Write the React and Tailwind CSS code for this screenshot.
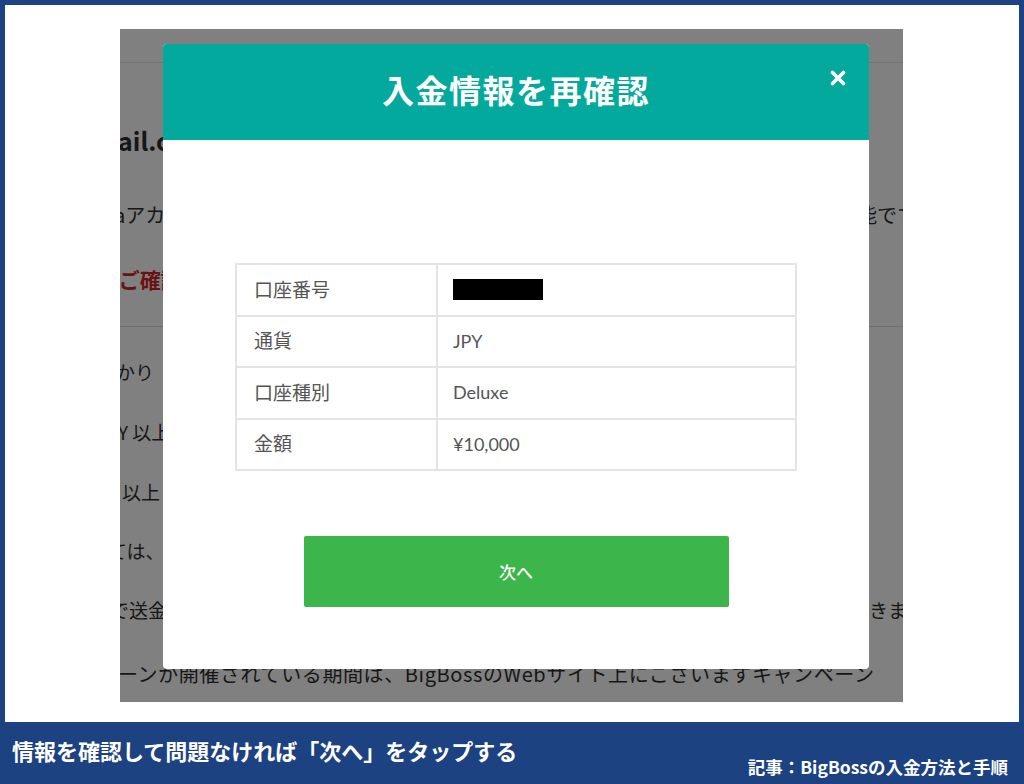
import React from "react";

const rows = [
    { label: "口座番号", value: null },
    { label: "通貨", value: "JPY" },
    { label: "口座種別", value: "Deluxe" },
    { label: "金額", value: "¥10,000" },
];

const jp = { fontFamily: '"Noto Sans CJK JP", "Noto Sans", sans-serif' };
const mixed = { fontFamily: 'Lato, "Noto Sans CJK JP", sans-serif' };

function BackgroundPage() {
    return (
        <div className="flex flex-col w-full h-full text-[#161616]" style={jp}>
            <div className="h-[34px] shrink-0 border-b border-[#747474]" />
            <div className="mt-[47px] h-[60px] shrink-0 flex items-center">
                <span className="ml-[-2px] text-[25px] font-bold leading-none">ail.com</span>
            </div>
            <div className="mt-[15px] h-[60px] shrink-0 flex items-center justify-between">
                <span className="ml-[-6px] text-[20px]">aアカウント</span>
                <span className="mr-[-14px] text-[20px]">能です</span>
            </div>
            <div className="mt-[5px] h-[60px] shrink-0 flex items-center">
                <span className="ml-[-8px] text-[21px] font-bold text-[#6a1212]">.ご確認</span>
            </div>
            <div className="h-[17px] shrink-0 border-b border-[#6e6e6e]" />
            <div className="mt-[15px] h-[60px] shrink-0 flex items-center">
                <span className="ml-[-4px] text-[19px]">かり</span>
            </div>
            <div className="h-[60px] shrink-0 flex items-center">
                <span className="ml-[-2px] text-[19px]">Y 以上</span>
            </div>
            <div className="h-[60px] shrink-0 flex items-center">
                <span className="ml-[-14px] text-[19px]">p 以上</span>
            </div>
            <div className="h-[58px] shrink-0 flex items-center">
                <span className="ml-[-12px] text-[19px]">ては、</span>
            </div>
            <div className="h-[60px] shrink-0 flex items-center justify-between">
                <span className="ml-[-10px] text-[19px]">で送金</span>
                <span className="mr-[-4px] text-[19px]">きま</span>
            </div>
            <div className="mt-[3px] h-[62px] shrink-0 flex items-center">
                <span className="ml-[-2px] whitespace-nowrap text-[20px] tracking-[0.6px]">
                    ーンが開催されている期間は、BigBossのWebサイト上にございますキャンペーン
                </span>
            </div>
        </div>
    );
}

function CloseIcon() {
    return (
        <svg width="16" height="16" viewBox="0 0 16 16">
            <path d="M2.5 2.5 L13.5 13.5 M13.5 2.5 L2.5 13.5" stroke="white" strokeWidth="3.6" strokeLinecap="round" />
        </svg>
    );
}

function ConfirmModal() {
    return (
        <div className="absolute left-[43px] top-[15px] w-[706px] h-[625px] bg-white rounded-[4px] overflow-hidden flex flex-col">
            <div className="relative h-[96px] shrink-0 bg-[#03a99c] flex items-center justify-center">
                <h1 className="mt-[-7px] text-white text-[32px] font-bold tracking-[1.5px] leading-none" style={jp}>
                    入金情報を再確認
                </h1>
                <button className="absolute right-[23px] top-[26px]">
                    <CloseIcon />
                </button>
            </div>
            <div className="flex flex-col items-center pt-[123px]">
                <table className="w-[562px] border-collapse border-2 border-[#e4e4e4] text-[#555]" style={mixed}>
                    <tbody>
                        {rows.map((row) => (
                            <tr key={row.label} className="h-[51.5px]">
                                <td className="w-[201px] border-2 border-[#e4e4e4] pl-[17px] text-[19px]">{row.label}</td>
                                <td className="border-2 border-[#e4e4e4] pl-[15px] text-[18px]">
                                    {row.value ? row.value : <div className="w-[90px] h-[21px] bg-black" />}
                                </td>
                            </tr>
                        ))}
                    </tbody>
                </table>
                <button
                    className="mt-[65px] w-[425px] h-[71px] bg-[#3cb54a] text-white text-[17px] font-medium rounded-[2px]"
                    style={jp}
                >
                    次へ
                </button>
            </div>
        </div>
    );
}

export default function App() {
    return (
        <div className="w-[1024px] h-[784px] bg-[#1d4281] flex flex-col pt-[5px] overflow-hidden">
            <div className="mx-[5px] h-[717px] shrink-0 bg-white pt-[24px] pl-[115px]">
                <div className="relative w-[783px] h-[673px] bg-[#808080] overflow-hidden">
                    <BackgroundPage />
                    <ConfirmModal />
                </div>
            </div>
            <div className="flex-1 flex justify-between items-start px-[12px] text-white font-bold" style={jp}>
                <p className="mt-[14px] text-[22px] leading-[28px]">情報を確認して問題なければ「次へ」をタップする</p>
                <p className="mt-[34px] mr-[4px] text-[17.5px] leading-[22px]">記事：BigBossの入金方法と手順</p>
            </div>
        </div>
    );
}
